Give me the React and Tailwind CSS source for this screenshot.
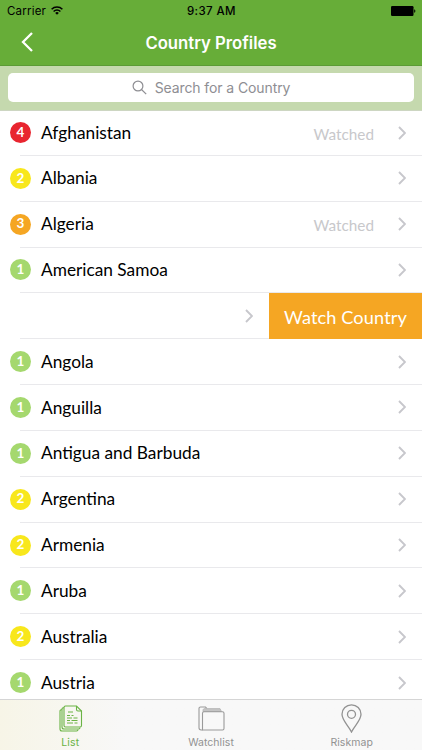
import clsx from 'clsx';

const riskColors = {
  1: 'bg-[#a5d86e]',
  2: 'bg-[#f8e71c]',
  3: 'bg-[#f5a623]',
  4: 'bg-[#e8252f]',
};

const countries = [
  { name: 'Afghanistan', risk: 4, watched: true },
  { name: 'Albania', risk: 2 },
  { name: 'Algeria', risk: 3, watched: true },
  { name: 'American Samoa', risk: 1 },
  { name: 'Andorra', risk: 1, swiped: true },
  { name: 'Angola', risk: 1 },
  { name: 'Anguilla', risk: 1 },
  { name: 'Antigua and Barbuda', risk: 1 },
  { name: 'Argentina', risk: 2 },
  { name: 'Armenia', risk: 2 },
  { name: 'Aruba', risk: 1 },
  { name: 'Australia', risk: 2 },
  { name: 'Austria', risk: 1 },
];

function WifiIcon() {
  return (
    <svg className="w-3 h-[9px] mb-0.5" viewBox="0 0 12 9" fill="none" stroke="#000">
      <path d="M.6 3.3a7.6 7.6 0 0 1 10.8 0" strokeWidth="1.5" />
      <path d="M2.6 5.4a4.8 4.8 0 0 1 6.8 0" strokeWidth="1.4" />
      <path d="M6 8.7 4.2 6.9a2.6 2.6 0 0 1 3.6 0Z" fill="#000" stroke="none" />
    </svg>
  );
}

function BatteryIcon() {
  return (
    <svg className="w-[25px] h-[10px]" viewBox="0 0 25 10">
      <rect width="22.5" height="10" rx="1.2" />
      <path d="M23.2 3.2c1.6.4 1.6 3.2 0 3.6Z" />
    </svg>
  );
}

function Chevron() {
  return (
    <svg className="w-2 h-[14px] shrink-0" viewBox="0 0 8 14" fill="none" stroke="#c7c7cc" strokeWidth="1.9">
      <path d="m1 1 6 6-6 6" />
    </svg>
  );
}

function ListIcon() {
  return (
    <svg className="w-6 h-[27px] ml-px" viewBox="0 0 24 27" fill="none" stroke="#6ab344" strokeWidth="1.1">
      <path d="M6.5 1h11l5 5v14.5a1.5 1.5 0 0 1-1.5 1.5H6.5A1.5 1.5 0 0 1 5 20.5v-18A1.5 1.5 0 0 1 6.5 1Z" />
      <path d="M17.5 1v3.5A1.5 1.5 0 0 0 19 6h3.5" />
      <path d="M5 2.8a1.5 1.5 0 0 0-2 1.5V22a2 2 0 0 0 2 2h14.500a1.500 1.500 0 0 0 1.500-1.500" />
      <path d="M3 4.8a1.5 1.5 0 0 0-2 1.5V24a2 2 0 0 0 2 2h14.500a1.500 1.500 0 0 0 1.500-1.500" />
      <path d="M9 7h5M8 10.500h3m1.500 0h2M8 13h5m1.500 0h4M8 15.500h3m1.500 0h6M8 18h6m1.500 0h3" />
    </svg>
  );
}

function FolderIcon() {
  return (
    <svg className="w-[27px] h-[25px]" viewBox="0 0 27 25" fill="none" stroke="#9a9a9a" strokeWidth="1.1">
      <path d="M4.500 24H3.200A2.200 2.200 0 0 1 1 21.800V2.500A1.500 1.500 0 0 1 2.500 1h5L9 2.600" />
      <path d="M5 5.500V4.200C5 3.200 5.800 2.600 6.800 2.600H22L23.500 5.500Z" fill="#c4c4c4" stroke="#b4b4b4" strokeWidth=".8" />
      <path d="M4.500 24V7.200A1.500 1.500 0 0 1 6 5.700h18.500A1.500 1.500 0 0 1 26 7.200v15.300a1.500 1.500 0 0 1-1.500 1.500Z" />
    </svg>
  );
}

function PinIcon() {
  return (
    <svg className="w-[21px] h-[29px]" viewBox="0 0 21 29" fill="none" stroke="#929292" strokeWidth="1.3">
      <path d="M10.500 28C7.500 21.500 1 16.500 1 10.300a9.500 9.500 0 0 1 19 0c0 6.200-6.500 11.200-9.500 17.700Z" />
      <circle cx="10.500" cy="10.300" r="4" />
    </svg>
  );
}

function CountryRow({ country }) {
  if (country.swiped) {
    return (
      <li className="h-[45.85px] flex items-stretch">
        <div className="flex-1 ml-5 pr-4 flex items-center justify-end border-b border-[#e9e9ec]">
          <Chevron />
        </div>
        <button className="w-[153px] pt-0.5 bg-[#f5a623] text-white text-[18.2px] tracking-[0.1px]">
          Watch Country
        </button>
      </li>
    );
  }
  return (
    <li className="h-[45.85px] first:h-[44.85px] flex pl-5">
      <div className="flex-1 flex items-center pr-4 border-b border-[#e9e9ec]">
        <span
          className={clsx(
            'w-[21px] h-[21px] -ml-2.5 rounded-full flex items-center justify-center text-white text-[13.5px] leading-none font-bold',
            riskColors[country.risk]
          )}
        >
          {country.risk}
        </span>
        <span className="ml-2.5 flex-1 text-[17.3px] text-black">{country.name}</span>
        {country.watched && <span className="mr-6 pt-[3px] text-[15.3px] text-[#c8c8cb]">Watched</span>}
        <Chevron />
      </div>
    </li>
  );
}

function Tab({ icon, label, active }) {
  return (
    <div
      className={clsx(
        'flex-1 flex flex-col items-center text-[10.5px] leading-3',
        active ? 'text-[#6ab344] tracking-[0.2px]' : 'text-[#929292] tracking-[0.05px]'
      )}
    >
      <div className="h-[37px] flex items-center justify-center">{icon}</div>
      <span>{label}</span>
    </div>
  );
}

export default function App() {
  return (
    <div className="w-full h-[750px] flex flex-col overflow-hidden bg-white font-['Inter','Liberation_Sans',sans-serif]">
      <header className="h-[66px] shrink-0 bg-[#67ad38] border-b border-[#5b9b35]">
        <div className="h-[22px] grid grid-cols-3 items-center pl-[7px] pr-[6px] text-[11.5px] text-black">
          <div className="flex items-center gap-[5px] pt-px tracking-[0.2px]">
            Carrier
            <WifiIcon />
          </div>
          <div className="pt-px text-center font-medium tracking-[0.4px]">9:37 AM</div>
          <div className="flex justify-end"><BatteryIcon /></div>
        </div>
        <div className="h-[43px] grid grid-cols-[60px_1fr_60px] items-center">
          <svg className="w-3 h-5 ml-[21px] mb-[3px]" viewBox="0 0 12 20" fill="none" stroke="#fff" strokeWidth="2.3">
            <path d="M11 1 2 10l9 9" />
          </svg>
          <h1 className="text-center text-white text-[16.7px] font-semibold">Country Profiles</h1>
        </div>
      </header>

      {/* Search */}
      <div className="h-[45px] shrink-0 px-2 pt-[7px] bg-[#c5d9ae] border-b border-[#cdd6c2]">
        <div className="h-[29px] rounded-[5px] bg-white flex items-center justify-center gap-2 text-[14px] tracking-[-0.1px] text-[#8e8e93]">
          <svg className="w-[15px] h-[15px]" viewBox="0 0 15 15" fill="none" stroke="currentColor" strokeWidth="1.2">
            <circle cx="6" cy="6" r="4.9" />
            <path d="m9.5 9.5 4.7 4.7" />
          </svg>
          Search for a Country
        </div>
      </div>

      <ul className="flex-1 min-h-0 overflow-hidden font-['Lato',sans-serif]">
        {countries.map(country => (
          <CountryRow key={country.name} country={country} />
        ))}
      </ul>

      {/* Tab bar */}
      <nav className="h-[51px] shrink-0 flex border-t border-[#d5d5d5] bg-linear-to-r from-[#f7f5e7] via-[#f8f8f8] via-30% to-[#f8f8f8]">
        <Tab icon={<ListIcon />} label="List" active />
        <Tab icon={<FolderIcon />} label="Watchlist" />
        <Tab icon={<PinIcon />} label="Riskmap" />
      </nav>
    </div>
  );
}
